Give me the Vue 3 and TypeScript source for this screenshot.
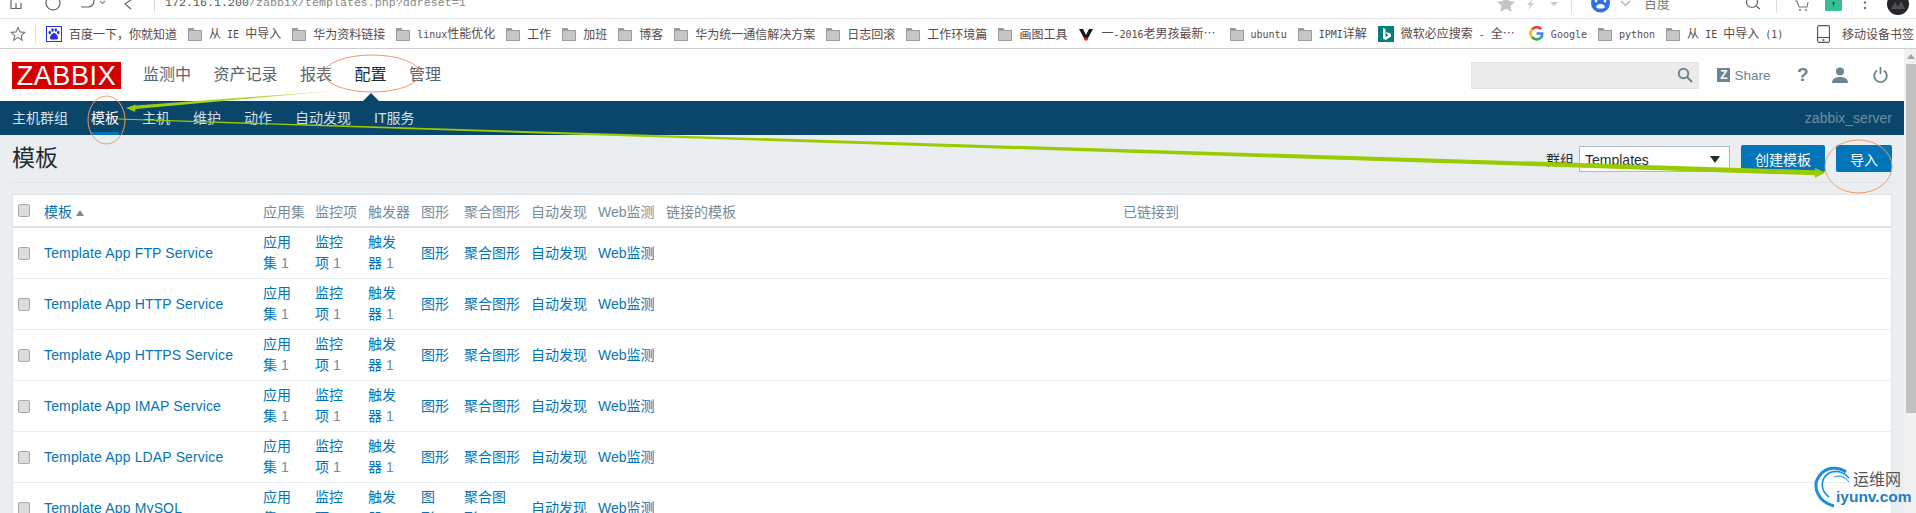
<script setup lang="ts">
interface Bookmark { text: string; icon: string; elide?: boolean }
const bookmarks: Bookmark[] = [
  { text: '百度一下，你就知道', icon: 'baidu' },
  { text: '从 IE 中导入', icon: 'folder' },
  { text: '华为资料链接', icon: 'folder' },
  { text: 'linux性能优化', icon: 'folder' },
  { text: '工作', icon: 'folder' },
  { text: '加班', icon: 'folder' },
  { text: '博客', icon: 'folder' },
  { text: '华为统一通信解决方案', icon: 'folder' },
  { text: '日志回滚', icon: 'folder' },
  { text: '工作环境篇', icon: 'folder' },
  { text: '画图工具', icon: 'folder' },
  { text: '一-2016老男孩最新⋯', icon: 'v', elide: true },
  { text: 'ubuntu', icon: 'folder' },
  { text: 'IPMI详解', icon: 'folder' },
  { text: '微软必应搜索 - 全⋯', icon: 'bing', elide: true },
  { text: 'Google', icon: 'google' },
  { text: 'python', icon: 'folder' },
  { text: '从 IE 中导入 (1)', icon: 'folder' },
]
function segments(text: string) {
  return (text.match(/[\x00-\x7f]+|[^\x00-\x7f]+/g) ?? []).map((t) => ({
    t,
    latin: /^[\x00-\x7f]/.test(t),
  }))
}
const mainNav = ['监测中', '资产记录', '报表', '配置', '管理']
const subNav = ['主机群组', '模板', '主机', '维护', '动作', '自动发现', 'IT服务']
const heads = ['应用集', '监控项', '触发器', '图形', '聚合图形', '自动发现', 'Web监测', '链接的模板', '已链接到']
const templates = [
  { name: 'Template App FTP Service', wrap: false },
  { name: 'Template App HTTP Service', wrap: false },
  { name: 'Template App HTTPS Service', wrap: false },
  { name: 'Template App IMAP Service', wrap: false },
  { name: 'Template App LDAP Service', wrap: false },
  { name: 'Template App MySQL', wrap: true },
]
</script>

<template>
  <div class="screen">
    <div class="urlbar">
      <svg class="ic-left" width="155" height="18" viewBox="0 0 155 18" fill="none" stroke="#666" stroke-width="1.2">
        <path d="M11 0v8.5h5V3M21 3v5.5h-5" />
        <path d="M58 -2a7 7 0 1 1-10 0" />
        <path d="M81 7h7a6 6 0 0 0 6-6v-4" />
        <path d="M100 1l2.500 2.500L105 1" stroke="#888" />
        <path d="M132 -1l-7 5 6 5" />
        <path d="M154.500 0v13" stroke="#ddd" />
      </svg>
      <div class="url"><b>172.16.1.200</b>/zabbix/templates.php?ddreset=1</div>
      <div class="grow"></div>
      <svg class="ic-mid" width="145" height="18" viewBox="1495 0 145 18">
        <path d="M1506 -5l3 6 6 .7-4.500 4 1.200 6-5.700-3-5.700 3 1.200-6-4.500-4 6-.7z" fill="#c4c4c4" />
        <path d="M1533 -2l-6 7h3l-2 5 6-7h-3z" fill="#d0d0d0" />
        <path d="M1550 2h8l-4 4z" fill="#c9c9c9" />
        <path d="M1571.500 0v13" stroke="#ddd" />
        <circle cx="1600.500" cy="3" r="9.500" fill="#2f6fe8" />
        <path d="M1596 7c1-4 8-4 9 0 0 2-9 2-9 0z" fill="#fff" />
        <circle cx="1596" cy="1" r="1.400" fill="#fff" />
        <circle cx="1605" cy="1" r="1.400" fill="#fff" />
        <path d="M1621 1l4.500 4.500L1630 1" stroke="#aaa" fill="none" stroke-width="1.200" />
      </svg>
      <div class="engine">百度</div>
      <svg class="ic-right" width="236" height="18" viewBox="1680 0 236 18" fill="none">
        <circle cx="1752" cy="2" r="5.500" stroke="#666" stroke-width="1.200" />
        <path d="M1756 6l4 3" stroke="#666" stroke-width="1.200" />
        <path d="M1776.500 0v13" stroke="#ddd" />
        <path d="M1795 1h2l2 6h8l1-5" stroke="#777" stroke-width="1.100" />
        <circle cx="1800" cy="10" r="1" fill="#777" />
        <circle cx="1806" cy="10" r="1" fill="#777" />
        <rect x="1825" y="-3" width="17" height="14" rx="1.500" fill="#35bf94" />
        <circle cx="1833.500" cy="3" r="1.200" fill="#0b5d46" />
        <path d="M1833.500 3v3" stroke="#0b5d46" />
        <circle cx="1865" cy="2.500" r="1.200" fill="#777" />
        <circle cx="1865" cy="8" r="1.200" fill="#777" />
        <circle cx="1898" cy="4" r="11" fill="#23252b" />
        <path d="M1891 9l4-7 3 5 3-6 4 8z" fill="#54504f" />
      </svg>
    </div>

    <div class="bookmarks">
      <svg class="star" width="16" height="16" viewBox="0 0 16 16" fill="none" stroke="#777" stroke-width="1.100">
        <path d="M8 1.500l2 4.400 4.700.5-3.500 3.200 1 4.700L8 11.400l-4.200 2.900 1-4.700L1.300 6.400 6 5.900z" />
      </svg>
      <span class="bm-sep"></span>
      <div v-for="b in bookmarks" :key="b.text" class="bm" :class="{ elide: b.elide }">
        <svg v-if="b.icon === 'folder'" width="14" height="14" viewBox="0 0 15 14" preserveAspectRatio="none">
          <path d="M0 1h6l1 2h8v11H0z" fill="#9c9c9c" />
          <rect x="1" y="4" width="13" height="9" fill="#c6c6c6" />
        </svg>
        <svg v-else-if="b.icon === 'baidu'" width="16" height="16" viewBox="0 0 16 16">
          <rect x=".5" y=".5" width="15" height="15" fill="#fff" stroke="#2932e1" />
          <g fill="#2932e1">
            <ellipse cx="3.800" cy="6.500" rx="1.300" ry="1.800" />
            <ellipse cx="6.500" cy="4" rx="1.300" ry="1.800" />
            <ellipse cx="9.800" cy="4" rx="1.300" ry="1.800" />
            <ellipse cx="12.300" cy="6.500" rx="1.300" ry="1.800" />
            <path d="M8 7c2 0 4 3 4 5 0 2-2 1.500-4 1.500S4 14 4 12c0-2 2-5 4-5z" />
          </g>
        </svg>
        <svg v-else-if="b.icon === 'v'" width="16" height="14" viewBox="0 0 16 14">
          <path d="M1 2h4l3 6 3-6h4L9 13H7z" fill="#15171a" />
          <circle cx="8" cy="12" r="1.800" fill="#ee1c25" />
        </svg>
        <svg v-else-if="b.icon === 'bing'" width="16" height="16" viewBox="0 0 16 16">
          <rect width="16" height="16" fill="#067f78" />
          <path d="M5 2l2.500 1v8l3-1.800-1.500-.8-1-2.400 5 1.800v2.700L7.500 14 5 12.500z" fill="#fff" />
        </svg>
        <svg v-else width="15" height="15" viewBox="0 0 15 15" fill="none" stroke-width="2.600">
          <path d="M12.300 3.200A6 6 0 0 0 3 3.500" stroke="#ea4335" />
          <path d="M3 3.500a6 6 0 0 0 0 7.500" stroke="#fbbc05" />
          <path d="M3 11a6 6 0 0 0 8.500 1" stroke="#34a853" />
          <path d="M11.500 12a5.500 5.500 0 0 0 1.700-4.500H7.500" stroke="#4285f4" />
        </svg>
        <span class="bm-text"><span v-for="(s, i) in segments(b.text)" :key="i" :class="{ latin: s.latin }">{{ s.t }}</span></span>
      </div>
      <div class="bm mobile">
        <svg width="13" height="18" viewBox="0 0 13 18" fill="none" stroke="#555" stroke-width="1.100">
          <rect x=".6" y=".6" width="11.800" height="16.800" rx="1.500" />
          <path d="M.6 12.500h11.800" />
          <circle cx="6.500" cy="15" r=".5" />
        </svg>
        <span class="bm-text">移动设备书签</span>
      </div>
    </div>

    <div class="viewport">
      <div class="page">
        <header class="top">
          <div class="logo">ZABBIX</div>
          <nav class="main-nav">
            <a v-for="n in mainNav" :key="n" :class="{ active: n === '配置' }">{{ n }}</a>
          </nav>
          <div class="grow"></div>
          <div class="search">
            <svg width="16" height="16" viewBox="0 0 16 16" fill="none" stroke="#6d8492" stroke-width="2">
              <circle cx="6.500" cy="6.500" r="4.800" />
              <path d="M10 10l5 5" />
            </svg>
          </div>
          <div class="share"><span class="z">Z</span>Share</div>
          <div class="help">?</div>
          <svg class="user" width="16" height="16" viewBox="0 0 16 16" fill="#6d8492">
            <circle cx="8" cy="4.500" r="4" />
            <path d="M0 16c0-4 3-6 8-6s8 2 8 6z" />
          </svg>
          <svg class="power" width="15" height="16" viewBox="0 0 15 16" fill="none" stroke="#6d8492" stroke-width="1.800">
            <path d="M4 3.500a6.300 6.300 0 1 0 7 0" />
            <path d="M7.500 0v7" />
          </svg>
        </header>

        <nav class="sub-nav">
          <a v-for="s in subNav" :key="s" :class="{ active: s === '模板' }">{{ s }}</a>
          <div class="grow"></div>
          <span class="server">zabbix_server</span>
        </nav>

        <main class="content">
          <div class="title-row">
            <h1>模板</h1>
            <div class="grow"></div>
            <label class="group-label">群组</label>
            <div class="select"><span>Templates</span><i></i></div>
            <button class="btn create">创建模板</button>
            <button class="btn import">导入</button>
          </div>

          <table class="grid">
            <colgroup>
              <col class="c-check" /><col class="c-name" /><col class="c-a" /><col class="c-b" /><col class="c-c" />
              <col class="c-d" /><col class="c-e" /><col class="c-f" /><col class="c-g" /><col class="c-h" /><col />
            </colgroup>
            <thead>
              <tr>
                <th><span class="box"></span></th>
                <th><a>模板</a><span class="sort"></span></th>
                <th v-for="h in heads" :key="h">{{ h }}</th>
              </tr>
            </thead>
            <tbody>
              <tr v-for="t in templates" :key="t.name">
                <td><span class="box"></span></td>
                <td><a class="name">{{ t.name }}</a></td>
                <td><a>应用集</a> <span class="n">1</span></td>
                <td><a>监控项</a> <span class="n">1</span></td>
                <td><a>触发器</a> <span class="n">1</span></td>
                <td v-if="t.wrap" class="keep"><a>图<br />形</a> <span class="n">1</span></td>
                <td v-else class="keep"><a>图形</a></td>
                <td v-if="t.wrap" class="keep"><a>聚合图<br />形</a> <span class="n">1</span></td>
                <td v-else class="keep"><a>聚合图形</a></td>
                <td class="keep"><a>自动发现</a></td>
                <td class="keep"><a>Web监测</a></td>
                <td></td>
                <td></td>
              </tr>
            </tbody>
          </table>
        </main>
      </div>
      <div class="scrollbar">
        <div class="arrow"></div>
        <div class="thumb"></div>
      </div>
    </div>

    <svg class="annotations" width="1916" height="513" viewBox="0 0 1916 513" fill="none">
      <defs>
        <linearGradient id="fade" gradientUnits="userSpaceOnUse" x1="343" y1="90" x2="135" y2="108">
          <stop offset="0" stop-color="#e8f2c0" />
          <stop offset=".45" stop-color="#b4d637" />
          <stop offset="1" stop-color="#99cc00" />
        </linearGradient>
      </defs>
      <ellipse cx="372" cy="73.500" rx="48" ry="18.500" stroke="#ee9b66" />
      <ellipse cx="106.500" cy="120" rx="18.500" ry="24" stroke="#ee9b66" />
      <ellipse cx="1858.500" cy="166.500" rx="33.500" ry="26.500" stroke="#ee9b66" />
      <path d="M343 90 136 105.500 135 104.800 126 108 135 112 135.500 109z" fill="url(#fade)" />
      <path d="M118 118.500 1815 170.200 1815 168 1825 172.500 1815 178 1815 175.300 118 119.600z" fill="#99cc00" />
    </svg>

    <div class="watermark">
      <svg width="46" height="42" viewBox="0 0 46 42" fill="none" stroke="#1a8fdc">
        <path d="M22 40C6 36 -1 20 8 9 14 1 26 0 34 6" stroke-width="3" />
        <path d="M17 31C8 24 8 13 17 7c6-3 14-2 20 5" stroke-width="1.600" />
        <path d="M22 11c6-2 12 0 15 5" stroke-width="1.200" stroke="#3aa7e6" />
      </svg>
      <span class="wm-cn">运维网</span>
      <span class="wm-en">iyunv.com</span>
    </div>
  </div>
</template>

<style scoped>
.screen {
  position: relative;
  width: 1916px;
  height: 513px;
  overflow: hidden;
  background: #fff;
  font-family: "Liberation Sans", "Noto Sans CJK SC", sans-serif;
  font-size: 14px;
}
.grow { flex: 1; }
a { cursor: pointer; }

.urlbar {
  display: flex;
  height: 18px;
  overflow: hidden;
  border-bottom: 1px solid #e6e6e6;
  box-sizing: content-box;
}
.urlbar svg { flex: none; overflow: hidden; }
.url {
  margin: -4px 0 0 10px;
  font: 11.67px/14px "Liberation Mono", monospace;
  color: #888;
  white-space: nowrap;
}
.url b { font-weight: 400; color: #555; }
.engine {
  margin: -5px 0 0 4px;
  width: 36px;
  font-size: 13px;
  line-height: 16px;
  color: #777;
  font-family: "Noto Sans CJK SC", sans-serif;
}

.bookmarks {
  display: flex;
  align-items: center;
  gap: 11px;
  height: 29px;
  padding: 0 2px 0 10px;
  border-bottom: 1px solid #d3cccb;
  color: #5a4a48;
  font: 12px/16px "Noto Sans CJK SC", sans-serif;
  white-space: pre;
}
.star { margin-right: -2px; }
.bm-sep { width: 1px; height: 20px; background: #e2e2e2; margin-right: -1px; }
.bm { display: flex; align-items: center; gap: 7px; flex: none; }
.bm svg { flex: none; }
.bm.elide { margin-right: 3px; }
.bm.mobile { margin-left: auto; gap: 12px; }
.bm-text { display: block; }
.latin { font: 10px/16px "DejaVu Sans Mono", monospace; }

.viewport { display: flex; height: 464px; }
.page { flex: 1; min-width: 0; background: #ebeef0; display: flex; flex-direction: column; overflow: hidden; }

.top {
  display: flex;
  flex: none;
  align-items: center;
  height: 52px;
  padding: 0 12px;
  background: #fff;
}
.logo {
  width: 109px;
  height: 27px;
  flex: none;
  background: #d40000;
  color: #fff;
  font-size: 27px;
  line-height: 28px;
  text-align: center;
  letter-spacing: 0.6px;
}
.main-nav { display: flex; gap: 22.500px; margin-left: 22px; font-size: 16px; color: #56666f; }
.main-nav a { position: relative; line-height: 24px; }
.main-nav a.active { color: #1f2c33; }
.main-nav a.active::after {
  content: "";
  position: absolute;
  left: 6px;
  top: 30px;
  border: 10px solid transparent;
  border-top: 0;
  border-bottom: 10px solid #0a466a;
}
.search {
  display: flex;
  align-items: center;
  justify-content: flex-end;
  width: 228px;
  height: 27px;
  box-sizing: border-box;
  padding-right: 5px;
  background: #ebebeb;
  border: 1px solid #e3e3e3;
}
.share {
  display: flex;
  align-items: center;
  margin-left: 18px;
  gap: 4px;
  color: #6d8492;
  font-size: 13.500px;
}
.z {
  display: block;
  width: 13px;
  height: 14px;
  background: #6d8492;
  color: #fff;
  font-size: 12px;
  font-weight: 700;
  line-height: 14px;
  text-align: center;
}
.help { margin-left: 26.500px; color: #6d8492; font-size: 19px; font-weight: 700; width: 10px; }
.user { margin-left: 25px; }
.power { margin-left: 25px; margin-right: 4px; }

.sub-nav {
  display: flex;
  flex: none;
  align-items: stretch;
  gap: 23px;
  height: 34px;
  padding: 0 12px;
  background: #0a466a;
  color: #d3e0e8;
  line-height: 35px;
  font-size: 14px;
}
.sub-nav a { display: block; }
.sub-nav a.active { color: #fff; box-shadow: inset 0 -3px 0 #0275b8; }
.server { color: #6f8ea1; }

.content { flex: none; padding: 0 12px; }
.title-row {
  display: flex;
  align-items: center;
  height: 47px;
  border-bottom: 1px solid #dfe4e7;
}
h1 { margin: 0; font-size: 23px; font-weight: 400; color: #1f2c33; line-height: 49px; }
.group-label { color: #1f2c33; margin-right: 5px; }
.select {
  position: relative;
  box-sizing: border-box;
  width: 151px;
  height: 26px;
  padding-left: 5px;
  background: #fff;
  border: 1px solid #acbbc2;
  color: #1f2c33;
  line-height: 26px;
}
.select i {
  position: absolute;
  right: 9px;
  top: 9px;
  border: 5px solid transparent;
  border-bottom: 0;
  border-top: 7px solid #1f2c33;
}
.btn {
  height: 27px;
  padding: 0;
  border: 0;
  border-radius: 2px;
  background: #0275b8;
  color: #fff;
  font: 14px "Liberation Sans", "Noto Sans CJK SC", sans-serif;
}
.create { width: 84px; margin-left: 11px; }
.import { width: 56px; margin-left: 11px; }

.grid {
  width: 100%;
  margin-top: 11px;
  table-layout: fixed;
  border-collapse: separate;
  border-spacing: 0;
  background: #fff;
  border: 1px solid #dfe4e7;
  border-bottom: 0;
  box-sizing: border-box;
}
.c-check { width: 31px; }
.c-name { width: 219px; }
.c-a { width: 52px; }
.c-b { width: 53px; }
.c-c { width: 53px; }
.c-d { width: 43px; }
.c-e { width: 67px; }
.c-f { width: 67px; }
.c-g { width: 68px; }
.c-h { width: 457px; }
th {
  height: 31px;
  padding: 0;
  text-align: left;
  font-weight: 400;
  color: #768d99;
  border-bottom: 2px solid #dfe4e7;
  white-space: nowrap;
}
th a { color: #0275b8; }
td {
  height: 50px;
  padding: 0 12px 0 0;
  color: #0275b8;
  line-height: 21px;
  border-bottom: 1px solid #ebeef0;
  box-sizing: content-box;
}
td.keep { padding-right: 0; white-space: nowrap; }
td a { color: #0275b8; }
td a.name { letter-spacing: 0.15px; white-space: nowrap; }
.n { color: #768d99; }
th:first-child, td:first-child { padding: 0 0 0 5px; }
.box {
  display: block;
  width: 10px;
  height: 11px;
  background: #dcdcdc;
  border: 1px solid #a9a9a9;
  border-radius: 2px;
}
.sort {
  display: inline-block;
  margin-left: 4px;
  vertical-align: 1px;
  border: 4px solid transparent;
  border-top: 0;
  border-bottom: 6px solid #768d99;
}

.scrollbar {
  width: 12px;
  flex: none;
  background: #f1f1f1;
  position: relative;
}
.arrow {
  margin: 5px 0 0 3px;
  width: 0;
  border: 4px solid transparent;
  border-top: 0;
  border-bottom: 5px solid #a3a3a3;
}
.thumb {
  margin: 5px 0 0 2px;
  height: 349px;
  background: #c0c0c0;
}

.annotations { position: absolute; left: 0; top: 0; pointer-events: none; }
.watermark { position: absolute; left: 1812px; top: 466px; width: 100px; height: 42px; }
.watermark svg { position: absolute; left: 0; top: 0; }
.wm-cn {
  position: absolute;
  left: 41px;
  top: 2px;
  font: 16px/20px "Noto Sans CJK SC", sans-serif;
  color: #555;
  white-space: nowrap;
}
.wm-en {
  position: absolute;
  left: 24px;
  top: 21px;
  font: 700 15.500px/20px "Liberation Sans", sans-serif;
  color: #1a80c8;
  white-space: nowrap;
}
</style>
